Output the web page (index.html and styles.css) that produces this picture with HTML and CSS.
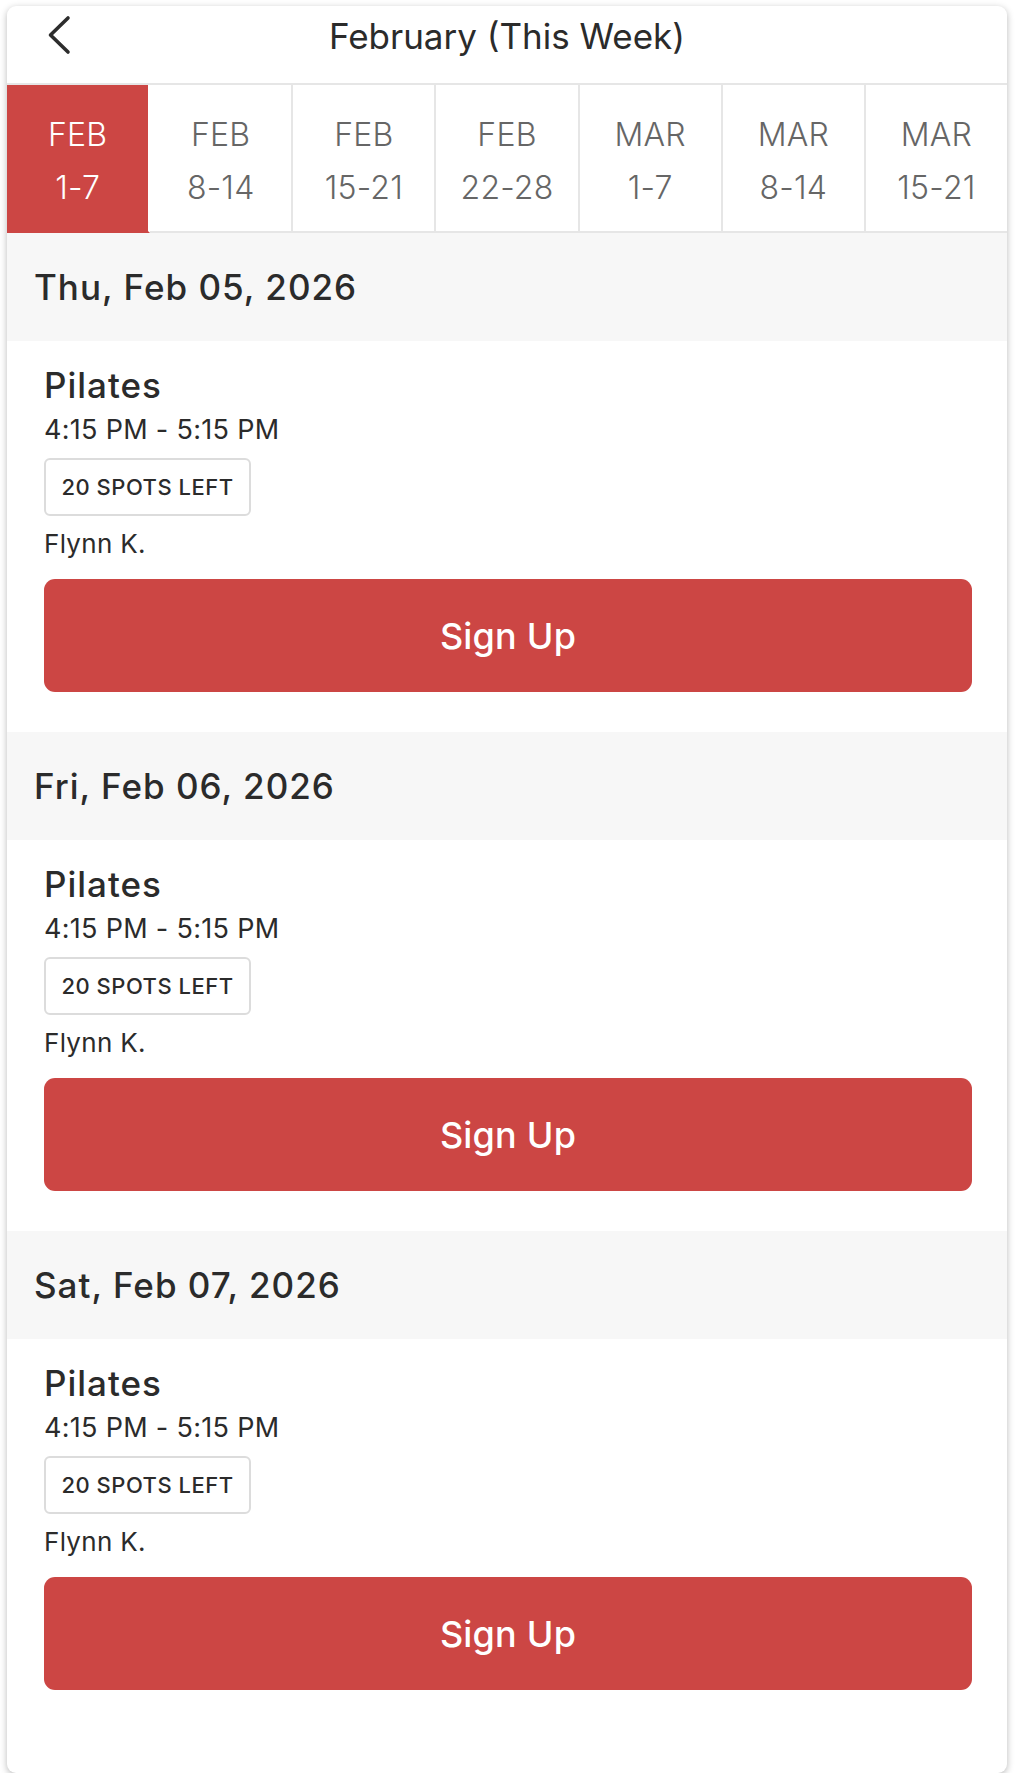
FILE: index.html
```html
<!DOCTYPE html>
<html lang="en">
<head>
<meta charset="utf-8">
<title>February (This Week)</title>
<link rel="stylesheet" href="styles.css">
</head>
<body>
<div class="card">
  <header class="topbar">
    <div class="back">
      <svg width="24" height="40" viewBox="0 0 24 40" aria-hidden="true"><path d="M21 3 L3.5 20 L21 37" fill="none" stroke="#2d2d2d" stroke-width="3.6" stroke-linecap="round" stroke-linejoin="round"/></svg>
    </div>
    <h1 class="title">February (This Week)</h1>
    <div></div>
  </header>
  <nav class="tabs">
    <div class="tab active"><span>FEB</span><span>1-7</span></div>
    <div class="tab"><span>FEB</span><span>8-14</span></div>
    <div class="tab"><span>FEB</span><span>15-21</span></div>
    <div class="tab"><span>FEB</span><span>22-28</span></div>
    <div class="tab"><span>MAR</span><span>1-7</span></div>
    <div class="tab"><span>MAR</span><span>8-14</span></div>
    <div class="tab"><span>MAR</span><span>15-21</span></div>
  </nav>

  <section class="day">
    <h2 class="day-head">Thu, Feb 05, 2026</h2>
    <div class="day-body">
      <div class="cls-name">Pilates</div>
      <div class="cls-time">4:15 PM - 5:15 PM</div>
      <div class="badge">20 SPOTS LEFT</div>
      <div class="coach">Flynn K.</div>
      <button class="signup">Sign Up</button>
    </div>
  </section>

  <section class="day">
    <h2 class="day-head">Fri, Feb 06, 2026</h2>
    <div class="day-body">
      <div class="cls-name">Pilates</div>
      <div class="cls-time">4:15 PM - 5:15 PM</div>
      <div class="badge">20 SPOTS LEFT</div>
      <div class="coach">Flynn K.</div>
      <button class="signup">Sign Up</button>
    </div>
  </section>

  <section class="day">
    <h2 class="day-head">Sat, Feb 07, 2026</h2>
    <div class="day-body">
      <div class="cls-name">Pilates</div>
      <div class="cls-time">4:15 PM - 5:15 PM</div>
      <div class="badge">20 SPOTS LEFT</div>
      <div class="coach">Flynn K.</div>
      <button class="signup">Sign Up</button>
    </div>
  </section>
</div>
</body>
</html>
```
FILE: styles.css
```css
* { box-sizing: border-box; }

html, body {
  margin: 0;
  padding: 0;
  background: #ffffff;
}

body {
  font-family: Inter, "Noto Sans", "Liberation Sans", sans-serif;
  color: #2b2b2b;
}

.card {
  margin: 6px 0 0 7px;
  width: 1000px;
  height: 1767px;
  background: #ffffff;
  border-radius: 9px;
  box-shadow: 0 2px 7px rgba(0, 0, 0, 0.28);
  overflow: hidden;
}

.topbar {
  display: grid;
  grid-template-columns: 120px 1fr 120px;
  align-items: start;
  height: 79px;
  border-bottom: 2px solid #e6e6e6;
}

.back {
  padding-left: 40px;
  padding-top: 9px;
}

.back svg { display: block; }

.title {
  margin: 10px 0 0;
  text-align: center;
  font-size: 35px;
  line-height: 40px;
  font-weight: 400;
  color: #2b2b2b;
}

.tabs {
  display: flex;
  height: 148px;
}

.tab {
  flex: 1 1 0;
  display: flex;
  flex-direction: column;
  align-items: center;
  justify-content: center;
  padding-top: 5px;
  border-right: 2px solid #e6e6e6;
  border-bottom: 2px solid #e6e6e6;
  color: #666666;
  font-size: 32px;
  font-weight: 300;
  line-height: 53px;
  letter-spacing: 0.2px;
}

.tab:last-child { border-right: none; }

.tab.active {
  background: #cc4644;
  color: #ffffff;
  border-right-color: #ffffff;
  border-bottom-color: #cc4644;
}

.day-head {
  margin: 0;
  height: 108px;
  display: flex;
  align-items: center;
  padding-left: 27px;
  background: #f7f7f7;
  font-size: 35px;
  font-weight: 500;
  letter-spacing: 1px;
  color: #2b2b2b;
}

.day-body {
  padding: 24px 36px 40px 37px;
  display: flex;
  flex-direction: column;
  align-items: flex-start;
}

.cls-name {
  font-size: 35px;
  line-height: 40px;
  font-weight: 500;
  letter-spacing: 1px;
}

.cls-time {
  margin-top: 9px;
  font-size: 27px;
  line-height: 32px;
  font-weight: 400;
  letter-spacing: 0.3px;
}

.badge {
  margin-top: 12px;
  height: 58px;
  width: 207px;
  display: flex;
  align-items: center;
  justify-content: center;
  border: 2px solid #dcdcdc;
  border-radius: 6px;
  font-size: 22px;
  font-weight: 500;
  letter-spacing: 0.5px;
}

.coach {
  margin-top: 13px;
  font-size: 26px;
  line-height: 30px;
  letter-spacing: 0.3px;
}

.signup {
  margin-top: 20px;
  width: 928px;
  height: 113px;
  border: none;
  border-radius: 11px;
  background: #cc4644;
  color: #ffffff;
  font-family: inherit;
  font-size: 36px;
  font-weight: 500;
  letter-spacing: 0.2px;
}
```
